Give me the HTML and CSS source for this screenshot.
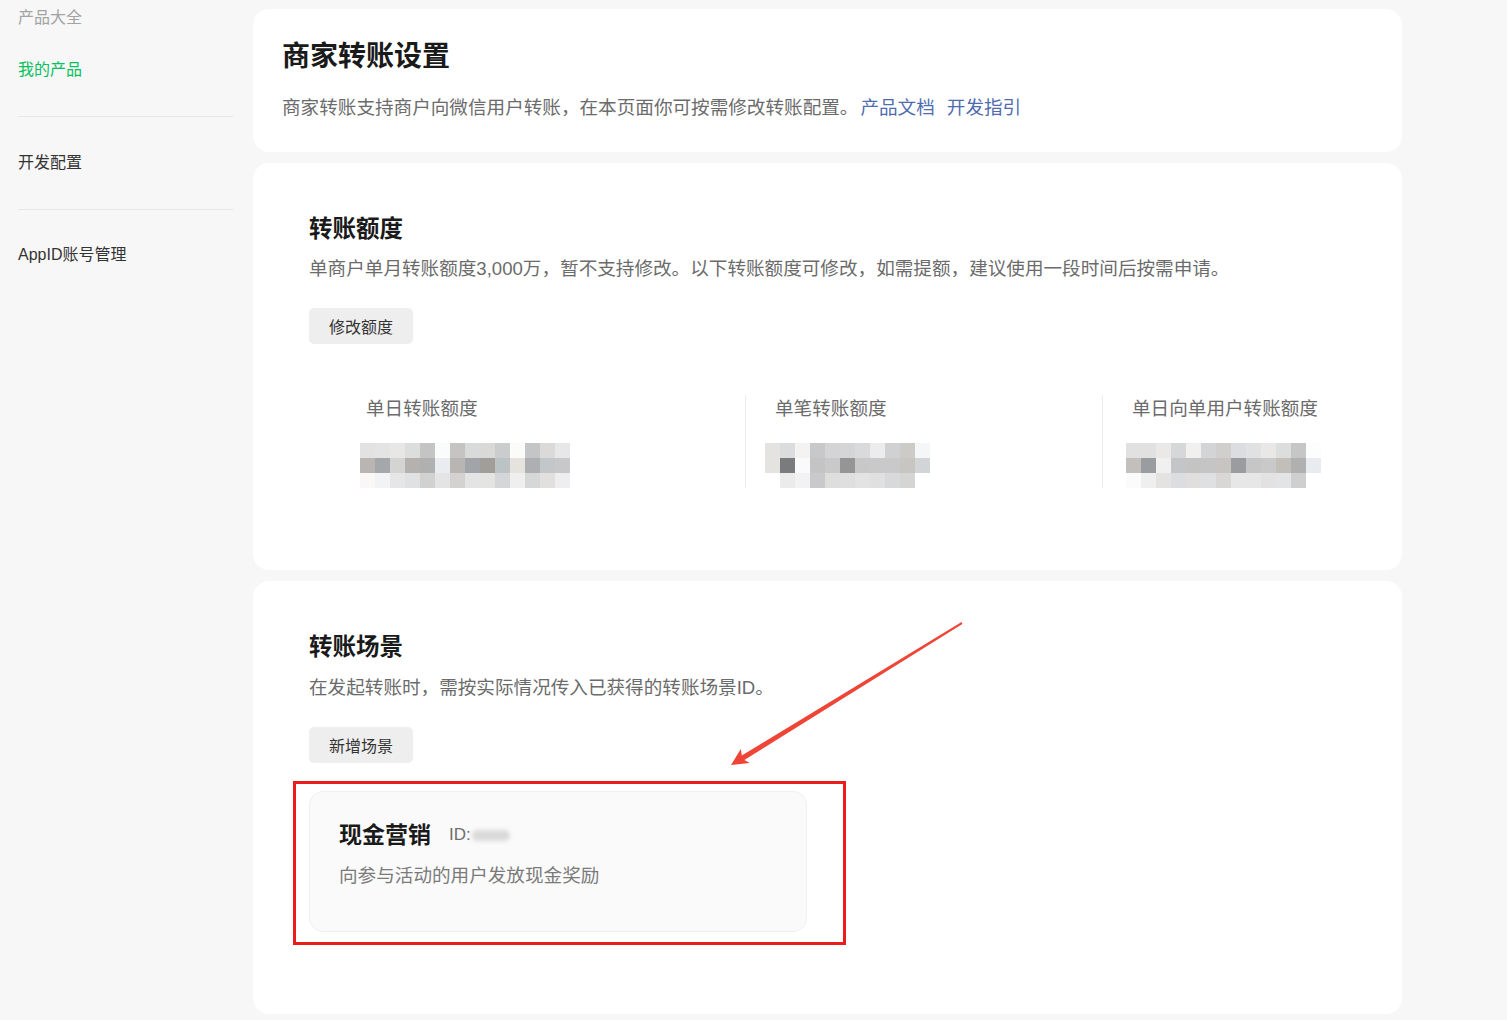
FILE: index.html
```html
<!DOCTYPE html>
<html lang="zh-CN">
<head>
<meta charset="utf-8">
<title>商家转账设置</title>
<link rel="stylesheet" href="styles.css">
</head>
<body>
<div class="layout">
  <aside class="sidebar">
    <div class="nav-head">
      <div class="nav-caption">产品大全</div>
      <a class="nav-link is-active">我的产品</a>
    </div>
    <div class="nav-section">
      <a class="nav-link">开发配置</a>
    </div>
    <div class="nav-section nav-section--last">
      <a class="nav-link">AppID账号管理</a>
    </div>
  </aside>

  <main class="main">
    <section class="card card--intro">
      <h1 class="page-title">商家转账设置</h1>
      <p class="desc desc--intro">商家转账支持商户向微信用户转账，在本页面你可按需修改转账配置。<a class="link">产品文档</a><a class="link link--next">开发指引</a></p>
    </section>

    <section class="card card--quota">
      <h2 class="section-title">转账额度</h2>
      <p class="desc">单商户单月转账额度3,000万，暂不支持修改。以下转账额度可修改，如需提额，建议使用一段时间后按需申请。</p>
      <button class="btn" type="button">修改额度</button>
      <div class="stats">
        <div class="stat">
          <div class="stat-label">单日转账额度</div>
          <div class="mosaic" data-key="daily"></div>
        </div>
        <div class="stat">
          <div class="stat-label">单笔转账额度</div>
          <div class="mosaic mosaic--wide-shift" data-key="single"></div>
        </div>
        <div class="stat">
          <div class="stat-label">单日向单用户转账额度</div>
          <div class="mosaic" data-key="perUser"></div>
        </div>
      </div>
    </section>

    <section class="card card--scenes">
      <h2 class="section-title">转账场景</h2>
      <p class="desc desc--scenes">在发起转账时，需按实际情况传入已获得的转账场景ID。</p>
      <button class="btn" type="button">新增场景</button>
      <div class="scene">
        <div class="scene-head">
          <span class="scene-name">现金营销</span>
          <span class="scene-id">ID:<span class="scene-id-mask"></span></span>
        </div>
        <p class="scene-desc">向参与活动的用户发放现金奖励</p>
      </div>
    </section>
  </main>
</div>

<div class="annotations">
  <div class="mark-box"></div>
  <svg class="mark-arrow" width="1507" height="1020" viewBox="0 0 1507 1020">
    <polygon points="961.6,622.1 741.8,755.4 740.8,749.0 731,765 749.8,763.0 744.4,759.9 962.4,623.9" fill="#ef4536"/>
  </svg>
</div>

<script src="mosaic.js"></script>
</body>
</html>
```

FILE: styles.css
```css
* {
  box-sizing: border-box;
}

html,
body {
  margin: 0;
  padding: 0;
}

body {
  background: #f7f7f7;
  font-family: "Liberation Sans", "Noto Sans CJK SC", sans-serif;
  color: #1a1a1a;
  min-height: 1020px;
  position: relative;
}

.layout {
  display: flex;
  align-items: flex-start;
}

/* ---------- sidebar ---------- */
.sidebar {
  width: 233px;
  padding-left: 18px;
  margin-right: 20px;
  flex-shrink: 0;
}

.nav-head {
  padding-top: 6px;
  padding-bottom: 34px;
}

.nav-caption {
  font-size: 16px;
  line-height: 24px;
  color: #a3a3a3;
}

.nav-head .nav-link {
  margin-top: 28px;
}

.nav-link {
  display: block;
  font-size: 16px;
  line-height: 24px;
  color: #333;
  text-decoration: none;
}

.nav-link.is-active {
  color: #07c160;
}

.nav-section {
  border-top: 1px solid #e6e6e6;
  padding-top: 34px;
  padding-bottom: 34px;
}

.nav-section--last {
  padding-top: 33px;
}

/* ---------- main column ---------- */
.main {
  width: 1149px;
  flex-shrink: 0;
  display: flex;
  flex-direction: column;
  gap: 11px;
  padding-top: 9px;
}

.card {
  background: #fff;
  border-radius: 16px;
}

.card--intro {
  padding: 30px 29px;
}

.card--quota {
  padding: 50px 56px 82px;
}

.card--scenes {
  padding: 50px 56px 82px;
}

.page-title {
  margin: 0;
  font-size: 28px;
  line-height: 36px;
  font-weight: 700;
  color: #1a1a1a;
}

.section-title {
  margin: 0;
  font-size: 23.5px;
  line-height: 32px;
  font-weight: 700;
  color: #1a1a1a;
}

.desc {
  margin: 10px 0 0;
  font-size: 18.6px;
  line-height: 28px;
  color: #6b6b6b;
}

.desc--intro {
  margin-top: 19px;
  padding-left: 0;
}

.desc--scenes {
  margin-top: 11px;
}

.link {
  color: #4f6cb0;
  text-decoration: none;
  margin-left: 2px;
}

.link--next {
  margin-left: 12px;
}

.btn {
  display: block;
  margin-top: 25px;
  height: 36px;
  padding: 0 20px;
  border: none;
  border-radius: 5px;
  background: #eeeeee;
  font-family: inherit;
  font-size: 16px;
  color: #333;
}

/* ---------- quota stats ---------- */
.stats {
  display: grid;
  grid-template-columns: 409px 357px 1fr;
  margin-top: 51px;
  margin-left: 27px;
}

.stat {
  padding-left: 30px;
}

.stat + .stat {
  border-left: 1px solid #ececec;
  padding-left: 29px;
}

.stat-label {
  font-size: 18.6px;
  line-height: 28px;
  color: #6b6b6b;
}

.mosaic {
  display: grid;
  grid-auto-rows: 15px;
  margin-top: 20px;
  margin-left: -6px;
}

.mosaic--wide-shift {
  margin-left: -10px;
}

/* ---------- scenes ---------- */
.scene {
  margin-top: 28px;
  width: 498px;
  padding: 28px 29px 41px;
  background: #fafafa;
  border: 1px solid #f0f0f0;
  border-radius: 14px;
}

.scene-head {
  display: flex;
  align-items: center;
  height: 30px;
}

.scene-name {
  font-size: 23px;
  line-height: 30px;
  font-weight: 700;
  color: #1a1a1a;
}

.scene-id {
  margin-left: 18px;
  font-size: 17px;
  color: #6e6e6e;
  display: inline-flex;
  align-items: center;
}

.scene-id-mask {
  display: inline-block;
  width: 38px;
  height: 11px;
  margin-left: 1px;
  border-radius: 6px;
  background: #d9d9d9;
  filter: blur(2px);
}

.scene-desc {
  margin: 12px 0 0;
  font-size: 18.6px;
  line-height: 28px;
  color: #7a7a7a;
}

/* ---------- annotation overlay ---------- */
.annotations {
  position: absolute;
  left: 0;
  top: 0;
  width: 1507px;
  height: 1020px;
  pointer-events: none;
}

.mark-box {
  position: absolute;
  left: 293px;
  top: 781px;
  width: 553px;
  height: 164px;
  border: 3px solid #ea1c1c;
}

.mark-arrow {
  position: absolute;
  left: 0;
  top: 0;
}
```

FILE: mosaic.js
```js
// Masked amounts are shown as a grid of 15px tiles.
const MOSAICS = {
  daily: [
    ["e2e2e2","e4e4e4","e8e7e6","dcdddd","c4c4c4","fafbfb","c6c4c2","d9dbda","d9d9d7","caccce","fbfbfa","c4c5c7","dcdad8","e6e7e9"],
    ["b8b5b2","a5a8aa","d4d4d2","b4b1ae","b0b0b0","e9ecf0","b8b5b2","a1a4a8","a19d98","bcc3c5","e6e2de","aeafb2","c4c7ca","c8c8c8"],
    ["f9f8f6","f2f3f5","e6e6e6","e0e1e3","d1d1d1","e4e4e4","d4d2d0","e4e4e4","e4e4e2","d4d6d8","efefef","d6d8d7","e2e0de","eeeef0"]
  ],
  single: [
    ["e5e3e2","dbdcde","f4f3f1","c7c8ca","d4d4d4","d4d5d7","d9dadc","ececec","d0d1d3","cdcbc8","f5f6f8"],
    ["e5e3e0","7a7b7d","fafafa","c4c4c4","c9c9c9","959595","c8c8c8","c9c9c9","c9c9c9","c8c6c2","d2d5d8"],
    ["ffffff","ebebeb","f2f2f2","c8c9cb","dededc","dfdfdf","e3e3e3","e0e0e0","d7d9db","d5d5d3","ffffff"]
  ],
  perUser: [
    ["e1e1e1","e1e1e1","eae9e7","d6d7d9","f1f0ee","d3d4d6","d1cfcd","dcdde0","e0e1e3","e9e8e6","dcdddd","c6c6c6","fcfdfd"],
    ["c2bfbc","9a9da0","f0f0f0","c4c5c7","c4c4c4","c5c5c5","c7c4c1","9b9ca0","c6c6c6","c9c9c9","c2bfbb","b0b0b0","e8ebef"],
    ["fbfbfb","efefef","e4e3e1","dcdde0","e0dfdd","dfe0e2","d8d7d5","e7e7e7","e7e7e7","e2e2e2","e3e4e6","cfcfcf","ffffff"]
  ]
};

document.querySelectorAll(".mosaic").forEach(function (el) {
  const rows = MOSAICS[el.dataset.key];
  if (!rows) return;
  el.style.gridTemplateColumns = "repeat(" + rows[0].length + ", 15px)";
  rows.forEach(function (row) {
    row.forEach(function (hex) {
      const tile = document.createElement("span");
      tile.style.background = "#" + hex;
      el.appendChild(tile);
    });
  });
});
```
